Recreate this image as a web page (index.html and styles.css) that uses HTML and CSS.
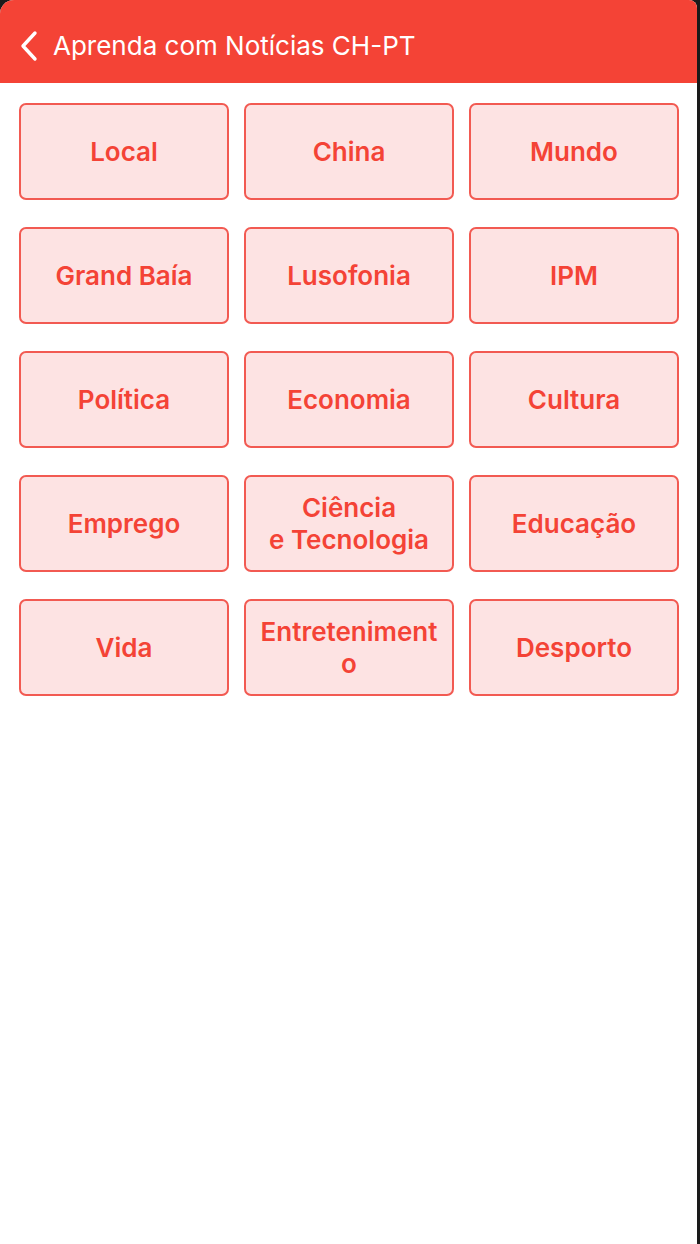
FILE: index.html
```html
<!DOCTYPE html>
<html lang="pt">
<head>
    <meta charset="UTF-8">
    <meta name="viewport" content="width=device-width, initial-scale=1.0">
    <title>Aprenda com Notícias CH-PT</title>
    <link rel="stylesheet" href="styles.css">
</head>
<body>
    <div class="screen">
        <div class="header">
            <svg class="back" width="20" height="32" viewBox="0 0 20 32">
                <path d="M16 3 L4 16 L16 29" fill="none" stroke="#fff" stroke-width="3.4" stroke-linecap="round" stroke-linejoin="round"/>
            </svg>
            <span class="title">Aprenda com Notícias CH-PT</span>
        </div>
        <div class="grid">
            <button class="cat">Local</button>
            <button class="cat">China</button>
            <button class="cat">Mundo</button>
            <button class="cat">Grand Baía</button>
            <button class="cat">Lusofonia</button>
            <button class="cat">IPM</button>
            <button class="cat">Política</button>
            <button class="cat">Economia</button>
            <button class="cat">Cultura</button>
            <button class="cat">Emprego</button>
            <button class="cat">Ciência<br>e Tecnologia</button>
            <button class="cat">Educação</button>
            <button class="cat">Vida</button>
            <button class="cat">Entretenimento</button>
            <button class="cat">Desporto</button>
        </div>
    </div>
</body>
</html>
```

FILE: styles.css
```css
html, body {
    margin: 0;
    height: 100%;
}
body {
    background: #1a1a1a;
    font-family: Inter, Roboto, "Liberation Sans", sans-serif;
}
.screen {
    width: 697px;
    height: 1244px;
    background: #fff;
    border-top-left-radius: 14px;
    border-top-right-radius: 8px;
    overflow: hidden;
}
.header {
    height: 83px;
    background: #f44336;
    display: flex;
    align-items: center;
    gap: 14px;
    padding: 8px 0 0 19px;
    box-sizing: border-box;
}
.back {
    display: block;
}
.title {
    color: #fff;
    font-size: 26px;
    font-weight: 400;
}
.grid {
    display: grid;
    grid-template-columns: repeat(3, 210px);
    column-gap: 15px;
    row-gap: 27px;
    padding: 20px 0 0 19px;
}
.cat {
    height: 97px;
    background: #fde3e3;
    border: 2px solid #f25a52;
    border-radius: 7px;
    color: #f44336;
    font-family: inherit;
    font-size: 26px;
    font-weight: 600;
    line-height: 32px;
    padding: 0 12px;
    overflow-wrap: anywhere;
    text-align: center;
}
```
